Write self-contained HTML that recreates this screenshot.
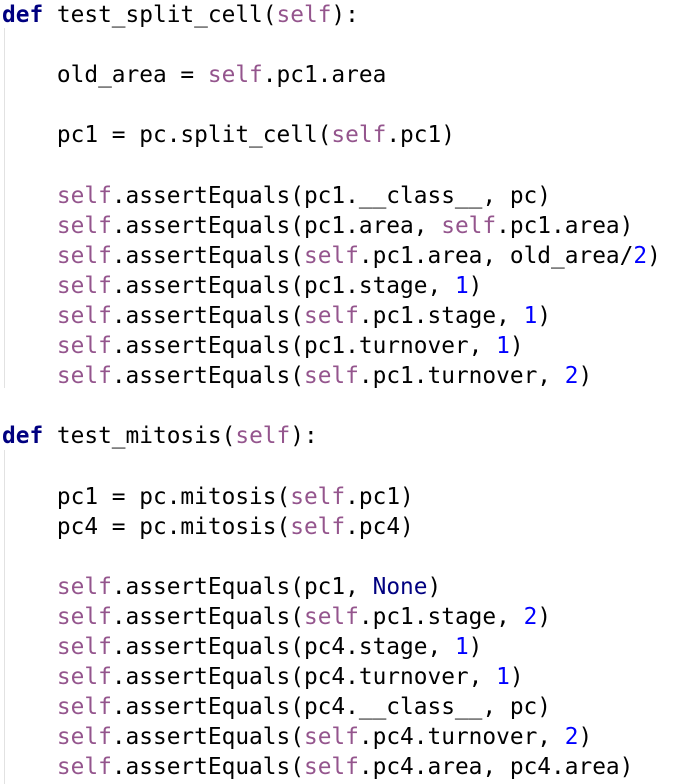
<!DOCTYPE html>
<html><head><meta charset="utf-8"><style>
html,body{margin:0;padding:0;background:#fff;width:682px;height:784px;overflow:hidden}
pre{margin:0;position:absolute;left:2px;top:0;font-family:"DejaVu Sans Mono","Liberation Mono",monospace;font-size:22.8px;line-height:30.1px;color:#000}
.k{color:#000080;font-weight:bold}
.s{color:#94558d}
.n{color:#0000ff}
.b{color:#000080}
.g{position:absolute;left:4px;width:1px;background:#e2e2e2}
</style></head><body>
<div class="g" style="top:28px;height:360px"></div>
<div class="g" style="top:450px;height:334px"></div>
<pre><span class="k">def</span> test_split_cell(<span class="s">self</span>):

    old_area = <span class="s">self</span>.pc1.area

    pc1 = pc.split_cell(<span class="s">self</span>.pc1)

    <span class="s">self</span>.assertEquals(pc1.__class__, pc)
    <span class="s">self</span>.assertEquals(pc1.area, <span class="s">self</span>.pc1.area)
    <span class="s">self</span>.assertEquals(<span class="s">self</span>.pc1.area, old_area/<span class="n">2</span>)
    <span class="s">self</span>.assertEquals(pc1.stage, <span class="n">1</span>)
    <span class="s">self</span>.assertEquals(<span class="s">self</span>.pc1.stage, <span class="n">1</span>)
    <span class="s">self</span>.assertEquals(pc1.turnover, <span class="n">1</span>)
    <span class="s">self</span>.assertEquals(<span class="s">self</span>.pc1.turnover, <span class="n">2</span>)

<span class="k">def</span> test_mitosis(<span class="s">self</span>):

    pc1 = pc.mitosis(<span class="s">self</span>.pc1)
    pc4 = pc.mitosis(<span class="s">self</span>.pc4)

    <span class="s">self</span>.assertEquals(pc1, <span class="b">None</span>)
    <span class="s">self</span>.assertEquals(<span class="s">self</span>.pc1.stage, <span class="n">2</span>)
    <span class="s">self</span>.assertEquals(pc4.stage, <span class="n">1</span>)
    <span class="s">self</span>.assertEquals(pc4.turnover, <span class="n">1</span>)
    <span class="s">self</span>.assertEquals(pc4.__class__, pc)
    <span class="s">self</span>.assertEquals(<span class="s">self</span>.pc4.turnover, <span class="n">2</span>)
    <span class="s">self</span>.assertEquals(<span class="s">self</span>.pc4.area, pc4.area)</pre>
</body></html>
